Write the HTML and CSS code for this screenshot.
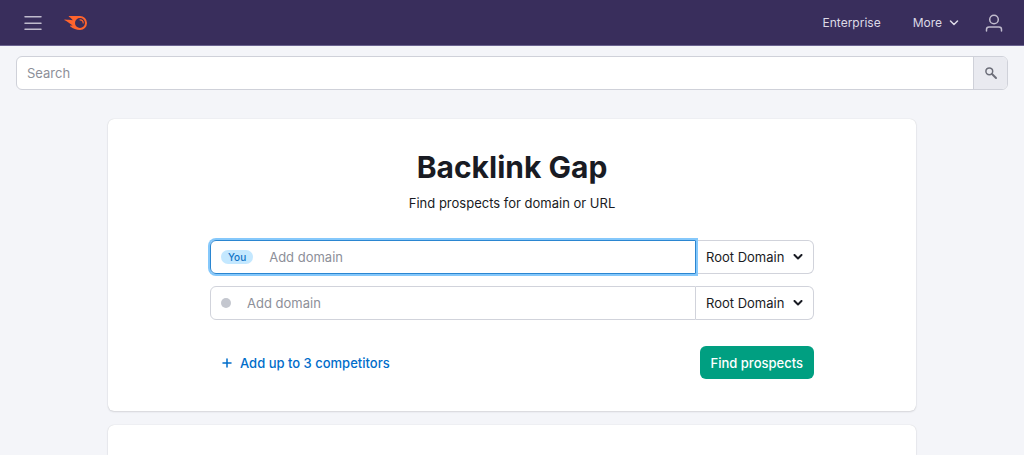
FILE: index.html
```html
<!DOCTYPE html>
<html lang="en">
<head>
<meta charset="utf-8">
<meta name="viewport" content="width=device-width, initial-scale=1">
<title>Backlink Gap</title>
<link rel="stylesheet" href="styles.css">
</head>
<body>
<header class="header">
  <button class="icon-button" type="button" aria-label="Menu">
    <svg width="18" height="16" viewBox="0 0 18 16" fill="none" stroke="currentColor" stroke-width="1.5"><path d="M1 1.800h16M1 8.300h16M1 14.300h16" stroke-linecap="round"/></svg>
  </button>
  <a class="logo" href="#" aria-label="Home">
    <svg width="24" height="16" viewBox="0 0 24 16"><path fill="#ff642d" fill-rule="evenodd" d="M5.400 1H16a7 7 0 1 1 0 14c-3.500 0-7-1.400-9.600-3.500-.7-.6-.4-1.100.3-1.100h2C6.500 9.200 3 6.200.8 5.300.1 5 .3 4.400 1 4.400c3 .1 5 .5 7.700.9C8 4 6.600 2.800 5.200 2.100 4.500 1.700 4.600 1 5.400 1zM16 3a5 5 0 1 0 0 10 5 5 0 0 0 0-10z"/><path d="M16 4.800a3.200 3.200 0 0 1 3.200 3.200" fill="none" stroke="#ff642d" stroke-width="1.200" stroke-linecap="round"/></svg>
  </a>
  <nav class="nav">
    <a class="nav-link" href="#">Enterprise</a>
    <button class="nav-link nav-more" type="button">More
      <svg width="10" height="6" viewBox="0 0 10 6" fill="none" stroke="currentColor" stroke-width="1.500" stroke-linecap="round" stroke-linejoin="round"><path d="M1.500 1 5 4.500 8.500 1"/></svg>
    </button>
    <button class="icon-button" type="button" aria-label="Account">
      <svg width="18" height="18" viewBox="0 0 18 18" fill="none" stroke="currentColor" stroke-width="1.500" stroke-linecap="round"><circle cx="9" cy="5.500" r="4.300"/><path d="M1.500 17v-1.500a2.500 2.500 0 0 1 2.500-2.500h10a2.500 2.500 0 0 1 2.500 2.500V17"/></svg>
    </button>
  </nav>
</header>
<form class="search" role="search">
  <input class="search-input" type="search" placeholder="Search" aria-label="Search">
  <button class="search-button" type="button" aria-label="Submit search">
    <svg width="14" height="14" viewBox="0 0 14 14" fill="none" stroke="currentColor"><circle cx="5.300" cy="5.300" r="3.400" stroke-width="1.500"/><path d="m8 8 4 4" stroke-width="2" stroke-linecap="round"/></svg>
  </button>
</form>
<main class="main">
  <section class="card">
    <h1 class="title">Backlink Gap</h1>
    <p class="subtitle">Find prospects for domain or URL</p>
    <form class="form">
      <div class="row">
        <label class="field field-active"><span class="badge">You</span><input class="field-input" type="text" placeholder="Add domain" aria-label="Your domain"></label>
        <div class="scope">
          <select class="scope-select" aria-label="Your domain scope"><option>Root Domain</option></select>
          <svg class="scope-arrow" width="10" height="6" viewBox="0 0 10 6"><path d="M1.500 1 5 4.500 8.500 1"/></svg>
        </div>
      </div>
      <div class="row">
        <label class="field"><span class="dot"></span><input class="field-input" type="text" placeholder="Add domain" aria-label="Competitor domain"></label>
        <div class="scope">
          <select class="scope-select" aria-label="Competitor domain scope"><option>Root Domain</option></select>
          <svg class="scope-arrow" width="10" height="6" viewBox="0 0 10 6"><path d="M1.500 1 5 4.500 8.500 1"/></svg>
        </div>
      </div>
      <div class="actions">
        <button class="add" type="button"><svg width="10" height="10" viewBox="0 0 10 10" fill="none" stroke="currentColor" stroke-width="1.500" stroke-linecap="round"><path d="M5 1v8M1 5h8"/></svg>Add up to 3 competitors</button>
        <button class="submit" type="button">Find prospects</button>
      </div>
    </form>
  </section>
  <section class="card card-next"></section>
</main>
</body>
</html>
```
FILE: styles.css
```css
* {
  box-sizing: border-box;
}

body {
  margin: 0;
  background: #f4f5f9;
  color: #191b23;
  font-family: Inter, "Liberation Sans", sans-serif;
  font-size: 13px;
  line-height: 20px;
}

button,
input,
select {
  margin: 0;
  padding: 0;
  border: 0;
  background: none;
  color: inherit;
  font: inherit;
}

svg {
  display: block;
}

.header {
  display: flex;
  align-items: center;
  height: 46px;
  padding: 0 21px 0 24px;
  background: #392e5c;
  border-bottom: 1px solid #6b6390;
  color: #d5d2df;
}

.icon-button {
  color: #c0bbcd;
}

.logo {
  margin-left: 22px;
}

.nav {
  display: flex;
  align-items: center;
  margin-left: auto;
}

.nav-link {
  color: #dddae6;
  font-size: 12px;
  text-decoration: none;
}

.nav-more {
  display: flex;
  align-items: center;
  gap: 7px;
  margin: 0 26px 0 32px;
}

.search {
  display: flex;
  height: 34px;
  margin: 10px 16px 0;
  border: 1px solid #cfd1d9;
  border-radius: 6px;
  background: #fff;
  overflow: hidden;
}

.search-input {
  flex: 1;
  min-width: 0;
  padding: 0 10px;
  outline: none;
}

::placeholder {
  color: #8d8f99;
  opacity: 1;
}

.search-button {
  display: grid;
  place-items: center;
  width: 34px;
  border-left: 1px solid #cfd1d9;
  background: #e9eaf0;
  color: #6c6e79;
}

.main {
  max-width: 808px;
  margin: 29px auto 0;
}

.card {
  padding: 28px 24px 32px;
  border-radius: 6px;
  background: #fff;
  box-shadow: 0 0 1px rgba(25, 27, 35, 0.2), 0 1px 2px rgba(25, 27, 35, 0.12);
}

.card-next {
  min-height: 30px;
  margin-top: 14px;
  padding: 15px 24px;
  border-radius: 6px 6px 0 0;
}

.title {
  margin: 0;
  font-size: 30px;
  line-height: 40px;
  font-weight: 700;
  text-align: center;
}

.subtitle {
  margin: 6px 0 0;
  text-align: center;
}

.form {
  display: flex;
  flex-direction: column;
  gap: 12px;
  max-width: 604px;
  margin: 27px auto 0;
}

.row {
  display: flex;
  height: 34px;
}

.field {
  display: flex;
  flex: 1;
  align-items: center;
  gap: 16px;
  min-width: 0;
  padding-left: 10px;
  border: 1px solid #d1d3db;
  border-radius: 6px 0 0 6px;
}

.field-active {
  z-index: 1;
  border-color: #2b86d1;
  box-shadow: 0 0 0 2px #85c8fb;
}

.field-input {
  flex: 1;
  min-width: 0;
  height: 100%;
  outline: none;
}

.badge {
  padding: 0 7px;
  border-radius: 7px;
  background: #c4e8ff;
  color: #0f73c4;
  font-size: 10px;
  line-height: 14px;
  font-weight: 500;
}

.dot {
  width: 10px;
  height: 10px;
  border-radius: 50%;
  background: #c4c7cf;
}

.scope {
  display: grid;
  align-items: center;
  width: 118px;
  border: 1px solid #d1d3db;
  border-left: 0;
  border-radius: 0 6px 6px 0;
}

.scope-select,
.scope-arrow {
  grid-area: 1 / 1;
}

.scope-select {
  width: 100%;
  height: 100%;
  padding: 0 24px 0 10px;
  appearance: none;
}

.scope-arrow {
  justify-self: end;
  margin-right: 10px;
  fill: none;
  stroke: #191b23;
  stroke-width: 2;
  stroke-linecap: round;
  stroke-linejoin: round;
  pointer-events: none;
}

.actions {
  display: flex;
  align-items: center;
  justify-content: space-between;
  margin-top: 14px;
  padding-left: 12px;
}

.add {
  display: flex;
  align-items: center;
  gap: 8px;
  color: #006dca;
  font-weight: 500;
}

.submit {
  height: 33px;
  padding: 0 11px;
  border-radius: 6px;
  background: #009f81;
  color: #fff;
  font-weight: 500;
}
```
